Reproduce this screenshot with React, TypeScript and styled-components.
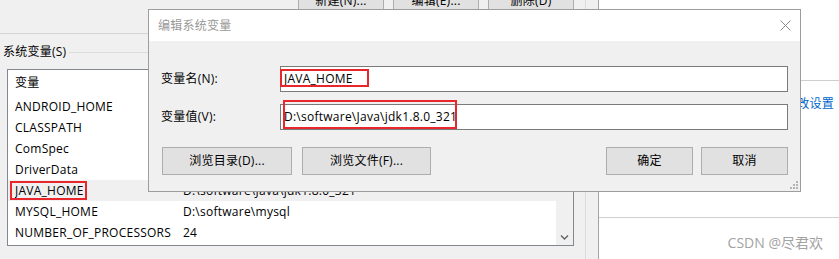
import { FC } from "react";
import styled, { createGlobalStyle } from "styled-components";

const GlobalStyle = createGlobalStyle`
  html, body {
    margin: 0;
    padding: 0;
    background: #ffffff;
  }
  body {
    font-family: "Open Sans", "Noto Sans CJK SC", sans-serif;
    font-size: 12px;
    letter-spacing: 0.25px;
    color: #000000;
  }
  * {
    box-sizing: border-box;
  }
`;

const Screen = styled.div`
  position: relative;
  display: flex;
  width: 839px;
  height: 259px;
  overflow: hidden;
  line-height: 16px;
`;

/* parent "environment variables" window */
const ParentWindow = styled.div`
  flex: none;
  width: 599px;
  height: 100%;
  background: #f0f0f0;
  border-right: 1px solid #a3a3a3;
`;

const ParentInner = styled.div`
  display: flex;
  flex-direction: column;
  width: 586px;
  height: 100%;
  border-right: 1px solid #dadada;
`;

const ButtonBar = styled.div`
  display: flex;
  gap: 9px;
  margin-top: -13px;
  padding-left: 298px;
`;

const TopButton = styled.div`
  display: flex;
  align-items: center;
  justify-content: center;
  width: 86px;
  height: 27px;
  background: #e1e1e1;
  border: 1px solid #adadad;
`;

const Separator = styled.div`
  height: 1px;
  margin-top: 19px;
  background: #d5d5d5;
`;

const GroupLegend = styled.div`
  display: flex;
  align-items: center;
  height: 16px;
  margin-top: 10px;
  padding-left: 3px;

  &::after {
    content: "";
    flex: 1;
    height: 1px;
    margin-left: 3px;
    background: #dcdcdc;
  }
`;

const ListBox = styled.div`
  display: flex;
  width: 567px;
  height: 177px;
  margin: 9px 0 0 7px;
  background: #ffffff;
  border: 1px solid #828790;
`;

const ListMain = styled.div`
  flex: 1;
  display: flex;
  flex-direction: column;
`;

const HeaderRow = styled.div`
  display: grid;
  grid-template-columns: 168px 1fr;
  align-items: center;
  height: 26px;
  padding-left: 7px;
`;

const Row = styled.div<{ $selected?: boolean }>`
  position: relative;
  display: grid;
  grid-template-columns: 168px 1fr;
  align-items: center;
  height: 21px;
  padding-left: 7px;
  background: ${(p) => (p.$selected ? "#f0f0f0" : "transparent")};
`;

const Cell = styled.span`
  white-space: nowrap;
  overflow: hidden;
`;

const ScrollBar = styled.div`
  display: flex;
  flex-direction: column;
  justify-content: flex-end;
  width: 17px;
  background: #f0f0f0;
`;

const ScrollArrow = styled.div`
  display: flex;
  align-items: center;
  justify-content: center;
  height: 17px;
`;

const RedMark = styled.div<{ $left: number; $top: number; $w: number; $h: number }>`
  position: absolute;
  left: ${(p) => p.$left}px;
  top: ${(p) => p.$top}px;
  width: ${(p) => p.$w}px;
  height: ${(p) => p.$h}px;
  border: 2px solid #e8262b;
  pointer-events: none;
`;

/* right-hand window */
const SideWindow = styled.div`
  flex: 1;
  display: flex;
  flex-direction: column;
  background: #ffffff;
`;

const SideHeader = styled.div`
  height: 81px;
  border-bottom: 1px solid #cfcfcf;
`;

const LinkSection = styled.div`
  height: 137px;
  padding: 15px 5px 0 0;
  text-align: right;
  color: #0066cc;
  border-bottom: 1px solid #cfcfcf;
`;

const Watermark = styled.div`
  padding: 17px 16px 0 0;
  text-align: right;
  font-size: 14px;
  letter-spacing: 0;
  color: #a3a3a3;
`;

/* edit dialog, lying over both windows */
const Dialog = styled.div`
  position: absolute;
  left: 148px;
  top: 9px;
  display: flex;
  flex-direction: column;
  width: 653px;
  height: 183px;
  background: #f0f0f0;
  border: 1px solid #9d9d9d;
`;

const TitleBar = styled.div`
  display: flex;
  align-items: center;
  justify-content: space-between;
  height: 31px;
  padding: 0 9px 0 9px;
  background: #ffffff;
  color: #999999;
`;

const DialogBody = styled.div`
  flex: 1;
  display: flex;
  flex-direction: column;
  padding: 25px 12px 16px 12px;
`;

const Field = styled.div`
  display: grid;
  grid-template-columns: 119px 1fr;
  align-items: center;
  height: 26px;

  & + & {
    margin-top: 12px;
  }
`;

const TextBox = styled.div`
  position: relative;
  display: flex;
  align-items: center;
  height: 26px;
  padding-left: 3px;
  background: #ffffff;
  border: 1px solid #7a7a7a;
`;

const ButtonRow = styled.div`
  display: flex;
  justify-content: space-between;
  margin-top: 17px;
`;

const ButtonGroup = styled.div<{ $gap: number }>`
  display: flex;
  gap: ${(p) => p.$gap}px;
  padding-left: ${(p) => (p.$gap === 10 ? 1 : 0)}px;
`;

const DlgButton = styled.div<{ $w: number }>`
  display: flex;
  align-items: center;
  justify-content: center;
  width: ${(p) => p.$w}px;
  height: 28px;
  background: #e1e1e1;
  border: 1px solid #adadad;
`;

const Grip = styled.svg`
  position: absolute;
  right: 2px;
  bottom: 2px;
`;

const vars: [string, string][] = [
  ["ANDROID_HOME", "D:\\Android\\sdk"],
  ["CLASSPATH", ".;%JAVA_HOME%\\lib;%JAVA_HOME%\\lib\\tools.jar"],
  ["ComSpec", "C:\\WINDOWS\\system32\\cmd.exe"],
  ["DriverData", "C:\\Windows\\System32\\Drivers\\DriverData"],
  ["JAVA_HOME", "D:\\software\\Java\\jdk1.8.0_321"],
  ["MYSQL_HOME", "D:\\software\\mysql"],
  ["NUMBER_OF_PROCESSORS", "24"],
];

const App: FC = () => {
  return (
    <Screen>
      <GlobalStyle />
      <ParentWindow>
        <ParentInner>
          <ButtonBar>
            <TopButton>新建(N)...</TopButton>
            <TopButton>编辑(E)...</TopButton>
            <TopButton>删除(D)</TopButton>
          </ButtonBar>
          <Separator />
          <GroupLegend>系统变量(S)</GroupLegend>
          <ListBox>
            <ListMain>
              <HeaderRow>
                <Cell>变量</Cell>
                <Cell>值</Cell>
              </HeaderRow>
              {vars.map(([name, value]) => (
                <Row key={name} $selected={name === "JAVA_HOME"}>
                  <Cell>{name}</Cell>
                  <Cell>{value}</Cell>
                  {name === "JAVA_HOME" && <RedMark $left={2} $top={1} $w={77} $h={19} />}
                </Row>
              ))}
            </ListMain>
            <ScrollBar>
              <ScrollArrow>
                <svg width="9" height="6" viewBox="0 0 9 6">
                  <path d="M1 1.5 L4.5 5 L8 1.5" fill="none" stroke="#606060" strokeWidth="1.3" />
                </svg>
              </ScrollArrow>
            </ScrollBar>
          </ListBox>
        </ParentInner>
      </ParentWindow>

      <SideWindow>
        <SideHeader />
        <LinkSection>更改设置</LinkSection>
        <Watermark>CSDN @尽君欢</Watermark>
      </SideWindow>

      <Dialog>
        <TitleBar>
          <span>编辑系统变量</span>
          <svg width="11" height="11" viewBox="0 0 11 11">
            <path d="M0.5 0.5 L10.5 10.5 M10.5 0.5 L0.5 10.5" stroke="#8a8a8a" strokeWidth="1" />
          </svg>
        </TitleBar>
        <DialogBody>
          <Field>
            <span>变量名(N):</span>
            <TextBox>
              JAVA_HOME
              <RedMark $left={-1} $top={2} $w={89} $h={18} />
            </TextBox>
          </Field>
          <Field>
            <span>变量值(V):</span>
            <TextBox>
              D:\software\Java\jdk1.8.0_321
              <RedMark $left={2} $top={-5} $w={174} $h={29} />
            </TextBox>
          </Field>
          <ButtonRow>
            <ButtonGroup $gap={10}>
              <DlgButton $w={130}>浏览目录(D)...</DlgButton>
              <DlgButton $w={129}>浏览文件(F)...</DlgButton>
            </ButtonGroup>
            <ButtonGroup $gap={8}>
              <DlgButton $w={87}>确定</DlgButton>
              <DlgButton $w={87}>取消</DlgButton>
            </ButtonGroup>
          </ButtonRow>
        </DialogBody>
        <Grip width="8" height="8" viewBox="0 0 8 8">
          <rect x="6" y="0" width="2" height="2" fill="#b5b5b5" />
          <rect x="3" y="3" width="2" height="2" fill="#b5b5b5" />
          <rect x="6" y="3" width="2" height="2" fill="#b5b5b5" />
          <rect x="0" y="6" width="2" height="2" fill="#b5b5b5" />
          <rect x="3" y="6" width="2" height="2" fill="#b5b5b5" />
          <rect x="6" y="6" width="2" height="2" fill="#b5b5b5" />
        </Grip>
      </Dialog>
    </Screen>
  );
};

export default App;
